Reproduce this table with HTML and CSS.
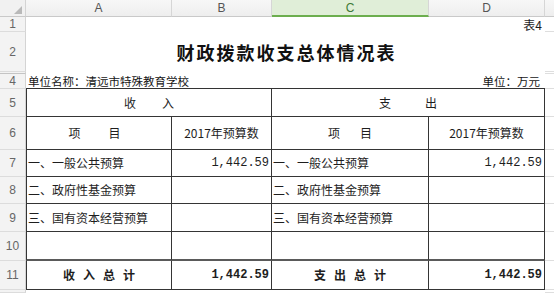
FILE: index.html
```html
<!DOCTYPE html>
<html lang="zh-CN">
<head>
<meta charset="utf-8">
<title>财政拨款收支总体情况表</title>
<link rel="stylesheet" href="styles.css">
</head>
<body>
<div class="sheet">
  <div class="corner"><svg class="tri" width="8" height="8" viewBox="0 0 8 8"><polygon points="8,0 8,8 0,8" fill="#b9b9b9"/></svg></div>
  <div class="ch">A</div>
  <div class="ch">B</div>
  <div class="ch sel">C</div>
  <div class="ch">D</div>
  <div class="ch last"></div>

  <div class="rh">1</div>
  <div class="merged tag">表4</div>
  <div class="e"></div>

  <div class="rh">2</div>
  <div class="merged title">财政拨款收支总体情况表</div>
  <div class="e"></div>

  <div class="rh hid"></div>
  <div class="merged"></div>
  <div class="e"></div>

  <div class="rh">4</div>
  <div class="unit unit-l">单位名称：清远市特殊教育学校</div>
  <div class="unit unit-r">单位：万元</div>
  <div class="e"></div>

  <div class="rh">5</div>
  <div class="c first ctr span2"><span class="sp gap-in">收</span><span>入</span></div>
  <div class="c ctr span2"><span class="sp gap-out">支</span><span>出</span></div>
  <div class="e"></div>

  <div class="rh">6</div>
  <div class="c first ctr shift"><span class="sp gap-a">项</span><span>目</span></div>
  <div class="c ctr">2017年预算数</div>
  <div class="c ctr"><span class="sp gap-c">项</span><span>目</span></div>
  <div class="c ctr">2017年预算数</div>
  <div class="e"></div>

  <div class="rh">7</div>
  <div class="c first lbl">一、一般公共预算</div>
  <div class="c num">1,442.59</div>
  <div class="c lbl">一、一般公共预算</div>
  <div class="c num">1,442.59</div>
  <div class="e"></div>

  <div class="rh">8</div>
  <div class="c first lbl">二、政府性基金预算</div>
  <div class="c num"></div>
  <div class="c lbl">二、政府性基金预算</div>
  <div class="c num"></div>
  <div class="e"></div>

  <div class="rh">9</div>
  <div class="c first lbl">三、国有资本经营预算</div>
  <div class="c num"></div>
  <div class="c lbl">三、国有资本经营预算</div>
  <div class="c num"></div>
  <div class="e"></div>

  <div class="rh">10</div>
  <div class="c first pre"></div>
  <div class="c pre"></div>
  <div class="c pre"></div>
  <div class="c pre"></div>
  <div class="e"></div>

  <div class="rh">11</div>
  <div class="c first ctr bold total">收入总计</div>
  <div class="c num bold">1,442.59</div>
  <div class="c ctr bold total">支出总计</div>
  <div class="c num bold">1,442.59</div>
  <div class="e"></div>

  <div class="rh"></div>
  <div class="merged"></div>
  <div class="e"></div>
</div>
</body>
</html>
```

FILE: styles.css
```css
* {
  box-sizing: border-box;
  margin: 0;
  padding: 0;
}

html, body {
  width: 554px;
  height: 293px;
  overflow: hidden;
  background: #ffffff;
}

body {
  font-family: "Noto Sans CJK SC", sans-serif;
  color: #1e1e1e;
}

.sheet {
  display: grid;
  grid-template-columns: 26px 146px 100px 157px 116px 9px;
  grid-template-rows: 17px 15px 40px 2px 15px 28px 33px 27px 27px 28px 29px 29px 3px;
}

.corner {
  background: #f1f1f1;
  border-right: 1px solid #d4d4d4;
  border-bottom: 1px solid #c9c9c9;
  display: flex;
  justify-content: flex-end;
  align-items: flex-end;
  padding: 0 3px 2px 0;
}

.ch {
  background: linear-gradient(#f7f7f7, #eeeeee);
  border-right: 1px solid #d6d6d6;
  border-bottom: 1px solid #c9c9c9;
  font-family: "Liberation Sans", sans-serif;
  font-size: 12px;
  line-height: 1;
  color: #555555;
  display: flex;
  align-items: center;
  justify-content: center;
}

.ch.sel {
  background: #e0eed8;
  border-bottom: 2px solid #6cae4e;
  color: #3d7a36;
}

.ch.last {
  border-right: none;
}

.rh {
  background: #f3f3f3;
  border-right: 1px solid #d4d4d4;
  border-bottom: 1px solid #dcdcdc;
  font-family: "Liberation Sans", sans-serif;
  font-size: 12px;
  line-height: 1;
  color: #666666;
  display: flex;
  align-items: center;
  justify-content: center;
}

.rh.hid {
  border-bottom: 1px solid #c4c4c4;
}

.merged {
  grid-column: span 4;
  display: flex;
  line-height: 1;
}

.e {
  border-bottom: 1px solid #dedede;
}

.tag {
  justify-content: flex-end;
  align-items: flex-end;
  font-size: 12px;
  padding: 0 3px 1px 0;
}

.title {
  justify-content: center;
  align-items: center;
  font-size: 18px;
  font-weight: 700;
  letter-spacing: 2px;
  padding-left: 2px;
  color: #111111;
}

.unit {
  grid-column: span 2;
  display: flex;
  align-items: flex-end;
  font-size: 11.5px;
  line-height: 1;
  padding-bottom: 1px;
  border-bottom: 1px solid #333333;
  color: #151515;
}

.unit-l {
  padding-left: 2px;
}

.unit-r {
  justify-content: flex-end;
  padding-right: 5px;
}

.c {
  border-right: 1px solid #353535;
  border-bottom: 1px solid #353535;
  display: flex;
  align-items: center;
  font-size: 12px;
  line-height: 1;
  white-space: nowrap;
}

.c.first {
  border-left: 1px solid #353535;
}

.span2 {
  grid-column: span 2;
}

.ctr {
  justify-content: center;
}

.shift {
  padding-right: 9px;
}

.lbl {
  padding-left: 1px;
}

.num {
  justify-content: flex-end;
  padding-right: 2px;
  font-family: "Liberation Mono", monospace;
  font-size: 12px;
}

.pre {
  border-bottom: 2px solid #5a5a5a;
}

.bold {
  font-weight: 700;
}

.total {
  letter-spacing: 8px;
  padding-left: 8px;
}

.gap-in {
  margin-right: 26px;
}

.gap-out {
  margin-right: 34px;
}

.gap-a {
  margin-right: 28px;
}

.gap-c {
  margin-right: 20px;
}
```
